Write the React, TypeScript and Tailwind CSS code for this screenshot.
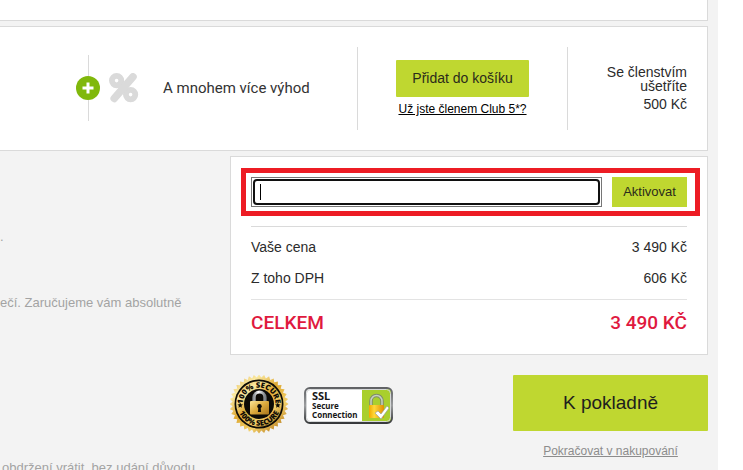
const priceRows = [
  { label: "Vaše cena", value: "3 490 Kč" },
  { label: "Z toho DPH", value: "606 Kč" },
]

const sealTeeth = Array.from({ length: 72 }, (_, i) => {
  const radius = i % 2 === 0 ? 29.5 : 26.5
  const angle = (i * Math.PI) / 36
  return `${(29 + radius * Math.cos(angle)).toFixed(2)},${(29 + radius * Math.sin(angle)).toFixed(2)}`
}).join(" ")

function PercentIcon() {
  return (
    <svg viewBox="0 0 30 30" className="h-[30px] w-[30px] shrink-0" aria-hidden="true">
      <g fill="none" stroke="#dadada">
        <circle cx="7.6" cy="7.6" r="4.7" strokeWidth="5.8" />
        <circle cx="21.6" cy="21.6" r="4.7" strokeWidth="5.8" />
        <path d="M24 3.800 5.200 25.500" strokeWidth="7.500" strokeLinecap="round" />
      </g>
    </svg>
  )
}

function SecureSeal() {
  return (
    <svg viewBox="0 0 60 60" className="h-[60px] w-[60px] shrink-0" role="img" aria-label="100% Secure">
      <defs>
        <linearGradient id="gold" x1="0" y1="0" x2="0.8" y2="1">
          <stop offset="0" stopColor="#d9a236" />
          <stop offset="0.25" stopColor="#fbe9a0" />
          <stop offset="0.5" stopColor="#dda832" />
          <stop offset="0.75" stopColor="#f3d06a" />
          <stop offset="1" stopColor="#b5791a" />
        </linearGradient>
        <linearGradient id="body" x1="0" y1="0" x2="1" y2="1">
          <stop offset="0" stopColor="#fbe596" />
          <stop offset="0.5" stopColor="#dba93c" />
          <stop offset="1" stopColor="#a8741b" />
        </linearGradient>
        <linearGradient id="steel" x1="0" y1="0" x2="1" y2="0">
          <stop offset="0" stopColor="#8e9498" />
          <stop offset="0.4" stopColor="#ffffff" />
          <stop offset="1" stopColor="#7b8185" />
        </linearGradient>
        <path id="arcTop" d="M12.700 29a16.300 16.300 0 0 1 32.600 0" />
        <path id="arcBottom" d="M7.300 29a21.700 21.700 0 0 0 43.400 0" />
      </defs>
      <polygon points={sealTeeth} fill="url(#gold)" />
      <circle cx="29" cy="29" r="24.5" fill="#0d0b06" />
      <circle cx="29" cy="29" r="22.8" fill="url(#gold)" />
      <circle cx="29" cy="29" r="15" fill="#0d0b06" />
      <g className="font-['Open_Sans',sans-serif] font-extrabold" fontSize="7.500" fill="#0d0b06" textAnchor="middle">
        <text><textPath href="#arcTop" startOffset="50%">100% SECURE</textPath></text>
        <text><textPath href="#arcBottom" startOffset="50%">100% SECURE</textPath></text>
      </g>
      <path d="m10.200 27.4.8 1.8 2 .2-1.500 1.300.4 2-1.700-1-1.700 1 .4-2-1.500-1.300 2-.2zM47.800 27.4l.8 1.8 2 .2-1.500 1.300.4 2-1.700-1-1.700 1 .4-2-1.500-1.300 2-.2z" fill="#0d0b06" />
      <path d="M24 27v-4.500a5.500 5.500 0 0 1 11 0V27" fill="none" stroke="url(#steel)" strokeWidth="3.200" />
      <rect x="20" y="26" width="19" height="13.500" rx="1" fill="url(#body)" />
      <circle cx="29.500" cy="31.200" r="2.200" fill="#0d0b06" />
      <path d="M28.500 31h2l.6 6h-3.200z" fill="#0d0b06" />
    </svg>
  )
}

function SslBadge() {
  return (
    <svg viewBox="0 0 90 38" className="h-[38px] w-[90px] shrink-0" role="img" aria-label="SSL Secure Connection">
      <defs>
        <linearGradient id="frame" x1="0" y1="0" x2="0" y2="1">
          <stop offset="0" stopColor="#606265" />
          <stop offset="0.5" stopColor="#9b9d9f" />
          <stop offset="1" stopColor="#37393b" />
        </linearGradient>
        <linearGradient id="lock" x1="0" y1="0" x2="1" y2="0">
          <stop offset="0" stopColor="#f2a900" />
          <stop offset="0.35" stopColor="#ffd83a" />
          <stop offset="1" stopColor="#e08d00" />
        </linearGradient>
      </defs>
      <rect x="1" y="1" width="87" height="35" rx="5" fill="#fff" />
      <path d="M58 2h26a4 4 0 0 1 4 4v25a4 4 0 0 1-4 4H58z" fill="#a9cf2d" />
      <rect x="2.500" y="2.500" width="84" height="32" rx="4" fill="none" stroke="#d5d7d8" />
      <rect x="1" y="1" width="87" height="35" rx="5" fill="none" stroke="url(#frame)" strokeWidth="2" />
      <g className="font-['Noto_Sans',sans-serif] font-bold" fill="#171717">
        <text x="8" y="13" fontSize="11">SSL</text>
        <text x="8" y="22" fontSize="8">Secure</text>
        <text x="8" y="31" fontSize="8">Connection</text>
      </g>
      <path d="M67 20v-6a5.500 5.500 0 0 1 11 0v6" fill="none" stroke="#7d8a6e" strokeWidth="3.500" />
      <path d="M67 20v-6a5.500 5.500 0 0 1 11 0v6" fill="none" stroke="#c9d2bd" strokeWidth="1.500" />
      <rect x="65" y="18" width="15" height="13" rx="1" fill="url(#lock)" />
      <path d="m71 26 3-2 3 3 6-8 2 2-8 11z" fill="#fff" stroke="#8b98a0" strokeWidth="0.600" />
    </svg>
  )
}

function ClubBanner() {
  return (
    <section className="flex h-[125px] items-center border border-l-0 border-[#dadada] bg-white">
      <div className="flex flex-1 items-center pb-0.5 pl-[76px]">
        <div className="flex flex-col items-center">
          <span className="h-[21px] w-px bg-[#dadada]" />
          <span className="flex h-6 w-6 items-center justify-center rounded-full bg-[#80b80b]">
            <svg viewBox="0 0 12 12" className="h-3 w-3" aria-hidden="true">
              <path d="M6 .5v11M.5 6h11" stroke="#fff" strokeWidth="3" />
            </svg>
          </span>
          <span className="h-[21px] w-px bg-[#dadada]" />
        </div>
        <div className="ml-[9px]">
          <PercentIcon />
        </div>
        <p className="ml-6 pt-0.5 font-[Roboto,sans-serif] text-[15px] text-[#333333]">A mnohem více výhod</p>
      </div>
      <div className="flex h-[83px] w-[210px] flex-col items-center border-l border-[#dadada] pt-[13px]">
        <button type="button" className="h-[37px] rounded-[1px] bg-[#bfd730] px-4 text-[14px] text-[#2b2b1b]">
          Přidat do košíku
        </button>
        <a href="#club" className="mt-1 text-[12px] leading-4 text-black underline">Už jste členem Club 5*?</a>
      </div>
      <div className="flex h-[83px] w-[140px] flex-col border-l border-[#dadada] pt-[18px] pr-5 pl-6 text-right text-[14px] leading-[14px]">
        <span>Se členstvím ušetříte</span>
        <span className="mt-1">500 Kč</span>
      </div>
    </section>
  )
}

function OrderSummary() {
  return (
    <section className="h-[199px] border border-[#dadada] bg-white pt-[11px]">
      <form className="mr-[7px] ml-[10px] flex gap-[10px] border-[5px] border-[#ed1c24] py-1 pr-2 pl-[5px]">
        <div className="relative flex-1 border border-[#767676] p-px">
          <input
            type="text"
            aria-label="Slevový kód"
            className="block h-[26px] w-full rounded-[4px] border-2 border-[#101010] px-1 text-[14px] outline-none"
          />
          <span className="absolute top-1.5 left-2 h-4 w-px bg-black" />
        </div>
        <button type="button" className="h-[30px] w-[75px] bg-[#bfd730] text-[13px] text-[#2b2b1b]">Aktivovat</button>
      </form>
      <div className="mx-5 mt-[10px] border-t border-[#dadada]">
        <dl className="pt-[5px] pb-[5px] text-[14px] leading-[31px]">
          {priceRows.map((row) => (
            <div key={row.label} className="flex justify-between">
              <dt>{row.label}</dt>
              <dd>{row.value}</dd>
            </div>
          ))}
        </dl>
        <div className="flex justify-between border-t border-[#e3e3e3] pt-2 font-[Roboto,sans-serif] text-[19px] leading-[30px] font-medium text-[#e0193e]">
          <span>CELKEM</span>
          <span>3 490 KČ</span>
        </div>
      </div>
    </section>
  )
}

export default function App() {
  return (
    <div className="h-screen overflow-hidden bg-white pr-[25px] font-['Liberation_Sans',Arial,sans-serif] text-[#2b2b2b]">
      <main className="h-full bg-[#f3f3f3] pr-[10px]">
        <div className="h-[21px] border-r border-b border-[#dadada] bg-white" />
        <div className="pt-[5px]">
          <ClubBanner />
        </div>
        <div className="flex pt-[5px]">
          <div className="min-w-0 flex-1 overflow-hidden text-[13px] leading-4 whitespace-nowrap text-[#a3a3a3]">
            <p className="mt-[73px]">.</p>
            <p className="mt-[50px]">ečí. Zaručujeme vám absolutně</p>
            <p className="mt-[149px] pl-0.5">obdržení vrátit, bez udání důvodu</p>
          </div>
          <div className="w-[478px]">
            <OrderSummary />
            <div className="flex pt-5">
              <div className="flex flex-1 items-start gap-[14px]">
                <SecureSeal />
                <div className="pt-3">
                  <SslBadge />
                </div>
              </div>
              <div className="flex w-[195px] flex-col items-center">
                <button type="button" className="h-14 w-full rounded-[1px] bg-[#bfd730] text-[19px] text-[#1e1e1e]">
                  K pokladně
                </button>
                <a href="#shop" className="mt-3 text-[12px] leading-4 text-[#8c8c8c] underline">Pokračovat v nakupování</a>
              </div>
            </div>
          </div>
        </div>
      </main>
    </div>
  )
}
